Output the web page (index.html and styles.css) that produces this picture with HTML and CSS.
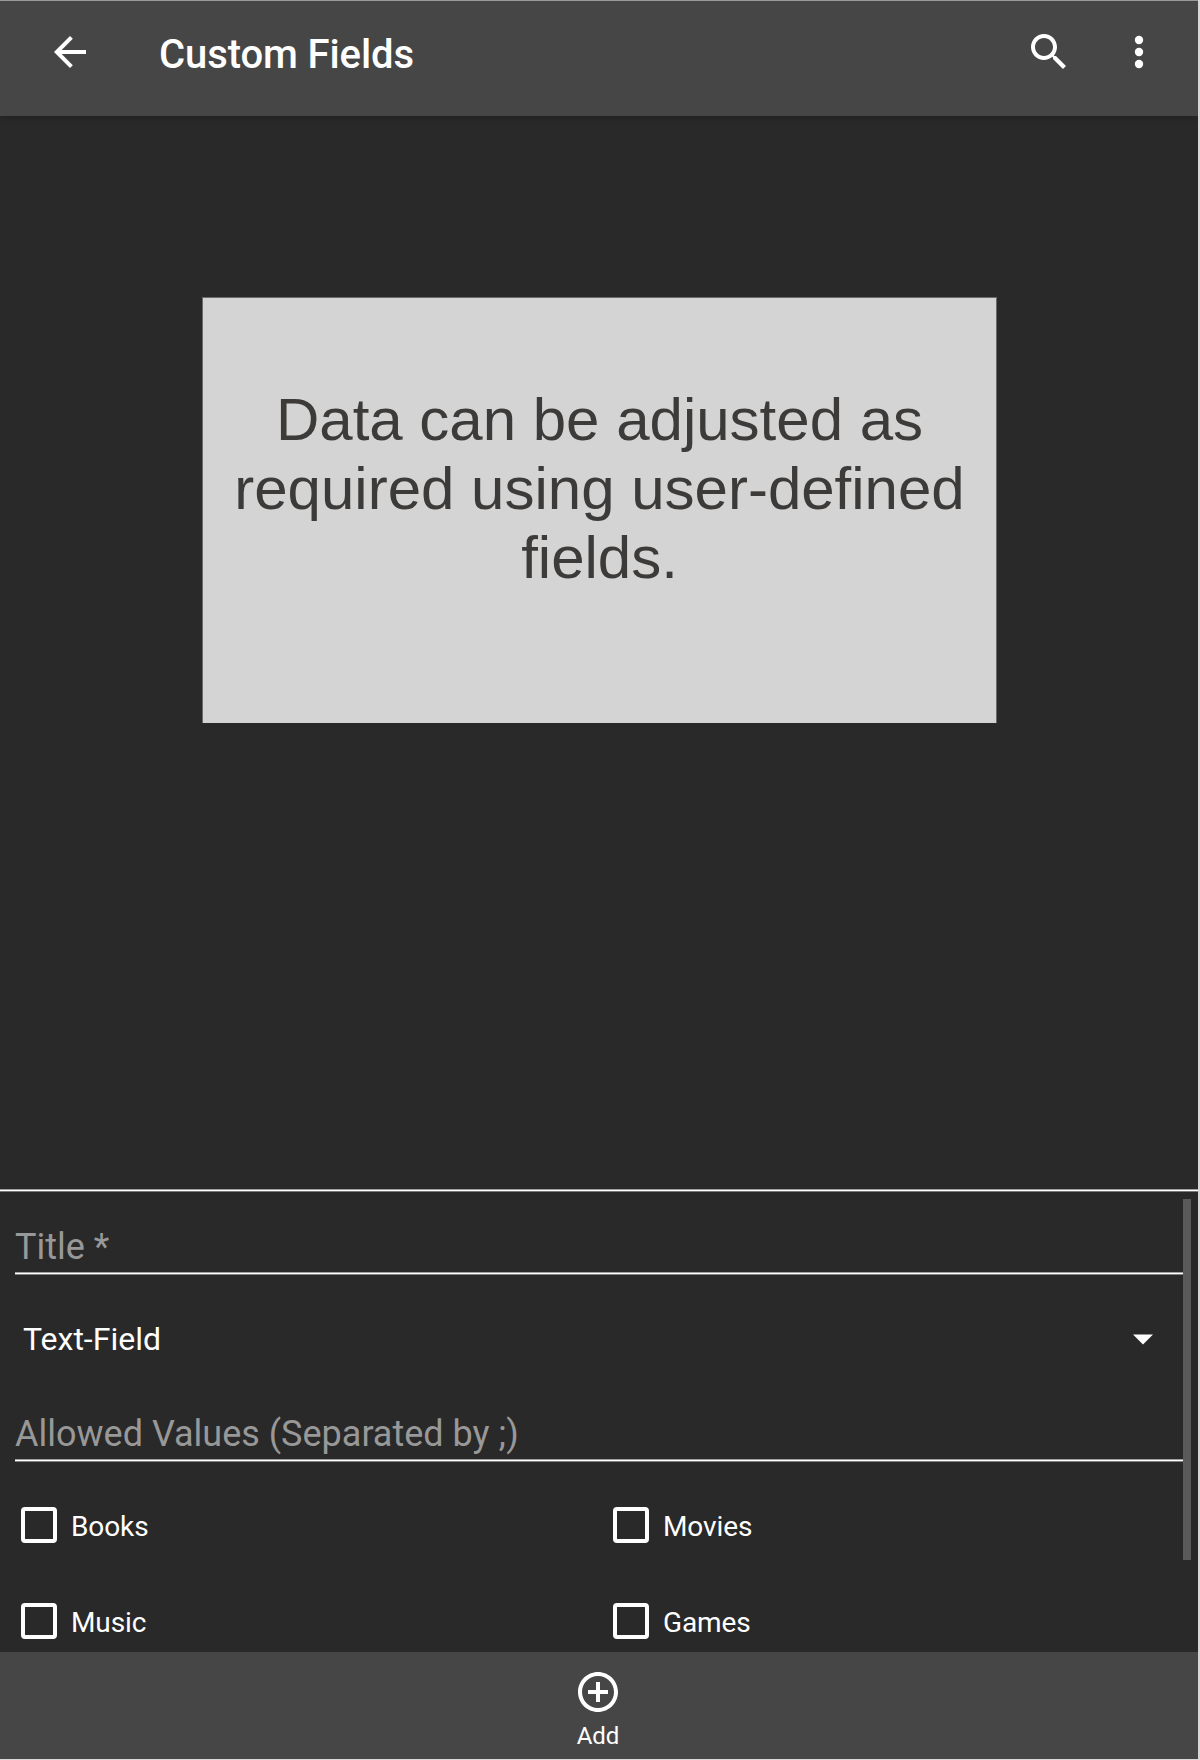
FILE: index.html
```html
<!DOCTYPE html>
<html lang="en">
<head>
<meta charset="utf-8">
<title>Custom Fields</title>
<link rel="stylesheet" href="styles.css">
</head>
<body>
<div class="screen">
  <header class="appbar">
    <svg class="icon" viewBox="0 0 24 24"><path d="M20 11H7.83l5.59-5.59L12 4l-8 8 8 8 1.41-1.41L7.83 13H20v-2z"/></svg>
    <h1 class="appbar-title">Custom Fields</h1>
    <svg class="icon" viewBox="0 0 24 24"><path d="M15.5 14h-.79l-.28-.27C15.41 12.59 16 11.11 16 9.5 16 5.91 13.09 3 9.5 3S3 5.91 3 9.5 5.91 16 9.5 16c1.61 0 3.09-.59 4.23-1.57l.27.28v.79l5 4.99L20.49 19l-4.99-5zm-6 0C7.01 14 5 11.99 5 9.500S7.01 5 9.5 5 14 7.01 14 9.5 11.99 14 9.5 14z"/></svg>
    <svg class="icon more" viewBox="0 0 24 24"><circle cx="12" cy="6" r="2.100"/><circle cx="12" cy="12" r="2.100"/><circle cx="12" cy="18" r="2.100"/></svg>
  </header>

  <main class="content">
    <p class="notice">Data can be adjusted as<br>required using user-defined<br>fields.</p>
  </main>

  <section class="form">
    <div class="form-body">
      <div class="field title-field"><span>Title *</span></div>
      <div class="select"><span>Text-Field</span><svg class="caret" viewBox="0 0 20 11"><path d="M0 .5h20l-10 10z"/></svg></div>
      <div class="field values-field"><span>Allowed Values (Separated by ;)</span></div>
      <div class="checks">
        <div class="check"><i class="box"></i><span>Books</span></div>
        <div class="check"><i class="box"></i><span>Movies</span></div>
        <div class="check"><i class="box"></i><span>Music</span></div>
        <div class="check"><i class="box"></i><span>Games</span></div>
      </div>
    </div>
    <div class="scrollbar"></div>
  </section>

  <footer class="toolbar">
    <svg class="icon" viewBox="0 0 24 24"><path d="M13 7h-2v4H7v2h4v4h2v-4h4v-2h-4V7zm-1-5C6.480 2 2 6.480 2 12s4.480 10 10 10 10-4.480 10-10S17.520 2 12 2zm0 18c-4.410 0-8-3.590-8-8s3.590-8 8-8 8 3.590 8 8-3.590 8-8 8z"/></svg>
    <span>Add</span>
  </footer>
</div>
</body>
</html>
```
FILE: styles.css
```css
* { box-sizing: border-box; }
body {
  margin: 0;
  background: #d8d8d6;
  font-family: Roboto, "Liberation Sans", sans-serif;
  color: #fff;
}
.screen {
  display: flex;
  flex-direction: column;
  width: 1198px;
  height: 1759px;
  background: #292929;
  overflow: hidden;
}
.icon { display: block; flex: none; width: 48px; height: 48px; fill: #fff; }

.appbar {
  flex: none;
  display: flex;
  align-items: flex-start;
  height: 116px;
  padding: 27px 35px 0 46px;
  border-top: 1px solid #999b9a;
  background: #464646;
  box-shadow: 0 1px 8px rgba(0, 0, 0, .22);
}
.appbar-title {
  flex: 1;
  margin: 3px 0 0 65px;
  font-size: 40px;
  line-height: 48px;
  font-weight: 500;
  letter-spacing: -.1px;
}
.more { margin-left: 42px; }

.content { flex: none; height: 1073px; padding: 181px 0 0 202px; }
.notice {
  width: 795px;
  height: 426px;
  margin: 0;
  padding-top: 87px;
  border: 1px solid #6a6a6a;
  border-bottom: 0;
  background: #d4d4d4;
  color: #3c3b39;
  font: 60px/69px "Liberation Sans", Arial, sans-serif;
  text-align: center;
  white-space: nowrap;
}

.form {
  flex: none;
  display: flex;
  height: 463px;
  background: linear-gradient(#a0a0a0 0 1px, #fff 1px 2px, #777 2px 3px, transparent 3px);
}
.form-body { width: 1168px; margin-left: 15px; }
.field {
  color: #989898;
  font-size: 36px;
  line-height: 44px;
  background: linear-gradient(#a0a0a0 0 1px, #fff 1px 2px, #808080 2px 3px) bottom / 100% 3px no-repeat;
}
.title-field { height: 86px; padding-top: 36px; }
.select {
  display: flex;
  justify-content: space-between;
  height: 100px;
  padding: 44px 30px 0 8px;
  font-size: 32px;
  line-height: 40px;
}
.caret { width: 20px; height: 11px; margin-top: 15px; fill: #fff; }
.values-field { height: 87px; padding-top: 37px; }
.checks {
  display: grid;
  grid-template-columns: 592px 1fr;
  grid-auto-rows: 96px;
  padding: 45px 0 0 6px;
}
.check { display: flex; gap: 14px; height: 36px; font-size: 28px; line-height: 39px; letter-spacing: -.1px; }
.box { width: 36px; height: 36px; border: 4px solid #fff; border-radius: 4px; }
.scrollbar { width: 8px; height: 361px; margin-top: 10px; background: #5a5a5a; }

.toolbar {
  flex: none;
  display: flex;
  flex-direction: column;
  align-items: center;
  height: 107px;
  padding: 16px 2px 0 0;
  background: #464646;
  font-size: 24px;
  line-height: 28px;
}
.toolbar span { margin-top: 6px; }
```
